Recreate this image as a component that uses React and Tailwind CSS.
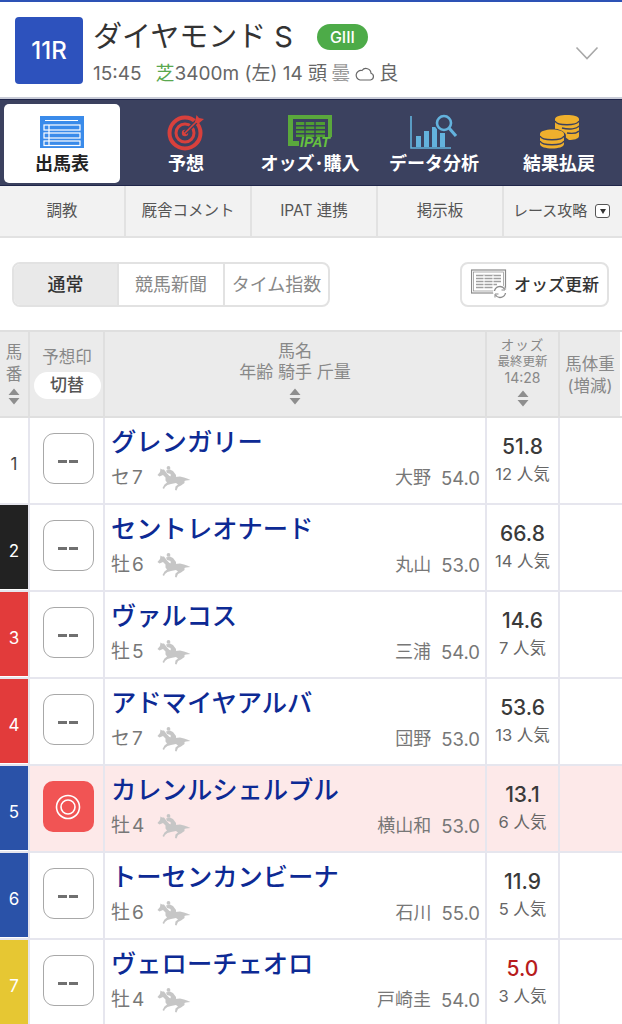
const horses = [
  { n: 1, bg: "bg-white", fg: "text-[#444]", name: "グレンガリー", sub: "セ", age: "7", j: "大野", w: "54.0", o: "51.8", p: "12" },
  { n: 2, bg: "bg-[#222222]", fg: "text-white", name: "セントレオナード", sub: "牡", age: "6", j: "丸山", w: "53.0", o: "66.8", p: "14" },
  { n: 3, bg: "bg-[#e23b3b]", fg: "text-white", name: "ヴァルコス", sub: "牡", age: "5", j: "三浦", w: "54.0", o: "14.6", p: "7" },
  { n: 4, bg: "bg-[#e23b3b]", fg: "text-white", name: "アドマイヤアルバ", sub: "セ", age: "7", j: "団野", w: "53.0", o: "53.6", p: "13" },
  { n: 5, bg: "bg-[#2a52a8]", fg: "text-white", name: "カレンルシェルブル", sub: "牡", age: "4", j: "横山和", w: "53.0", o: "13.1", p: "6", mark: true },
  { n: 6, bg: "bg-[#2a52a8]", fg: "text-white", name: "トーセンカンビーナ", sub: "牡", age: "6", j: "石川", w: "55.0", o: "11.9", p: "5" },
  { n: 7, bg: "bg-[#e6c733]", fg: "text-white", name: "ヴェローチェオロ", sub: "牡", age: "4", j: "戸崎圭", w: "54.0", o: "5.0", p: "3", hot: true },
];

function Horse() {
  return (
    <svg width="34" height="25" viewBox="0 0 34 25" fill="#c6c6c6" className="shrink-0">
      <path d="M0.5 9 L3 6 L3.5 2.5 L5 3.5 L7 3.5 L10 7.5 L12.5 10 L18 11 L23 10.5 L27 11.5 L30 12.5 L33.5 14 L29 14.5 L27.5 15 L27.5 17 L24 19.5 L21 21 L19.5 24.5 L18 24 L18.5 20.5 L21 18.5 L19 17 L14 18 L10.5 19 L8 21 L7 23 L5.5 22 L7.5 18.5 L10 16.5 L8.5 14.5 L8.5 11.5 L6 9 L2.5 10.5 Z" />
      <circle cx="11.5" cy="1.9" r="1.9" />
      <path d="M9 4.5 L13 3.5 L16 5 L19 9 L19 12 L14 12 L13.5 8 L10 7 Z" />
    </svg>
  );
}

function Sort() {
  return (
    <svg width="12" height="17" viewBox="0 0 12 17" fill="#8e8e8e" className="shrink-0">
      <path d="M6 0.5 L11.5 7 H0.5 Z M0.5 10 H11.5 L6 16.5 Z" />
    </svg>
  );
}

function Row({ h }) {
  return (
    <div className={`grid h-[87px] grid-cols-[30px_75px_382px_73px_62px] border-b-2 border-[#e6e6ee] ${h.mark ? "bg-[#fde9e9]" : "bg-white"}`}>
      <div className="border-r-2 border-[#e6e6ee] bg-white">
        <div className={`flex h-[84px] w-[28px] items-center justify-center pt-[10px] text-[17px] ${h.bg} ${h.fg}`}>{h.n}</div>
      </div>
      <div className="flex items-start justify-center border-r-2 border-[#e6e6ee] pl-[3px] pt-[15px]">
        {h.mark ? (
          <div className="flex h-[51px] w-[51px] items-center justify-center rounded-[10px] bg-[#f15454]">
            <svg width="26" height="26" viewBox="0 0 26 26" fill="none" stroke="#fff" strokeWidth="1.6">
              <circle cx="13" cy="13" r="11.5" />
              <circle cx="13" cy="13" r="7" />
            </svg>
          </div>
        ) : (
          <div className="flex h-[51px] w-[51px] items-center justify-center rounded-[11px] border border-[#a8a8a8] bg-white pt-[6px]">
            <div className="flex gap-[2px]">
              <span className="h-[2.5px] w-[9px] bg-[#707070]" />
              <span className="h-[2.5px] w-[9px] bg-[#707070]" />
            </div>
          </div>
        )}
      </div>
      <div className="flex flex-col border-r-2 border-[#e6e6ee] pl-[6px] pr-[5px] pt-[6px]">
        <div className="whitespace-nowrap text-[25.3px] font-medium leading-[36px] text-[#0d2a94]">{h.name}</div>
        <div className="mt-[1px] flex items-center">
          <span className="w-[46px] text-[19px] leading-[34px] tracking-[2px] text-[#777]">{h.sub}{h.age}</span>
          <Horse />
          <span className="ml-auto text-[18px] leading-[34px] text-[#777]">{h.j}</span>
          <span className="ml-[10px] text-[18.5px] leading-[34px] text-[#777]">{h.w}</span>
        </div>
      </div>
      <div className="flex flex-col items-center border-r-2 border-[#e6e6ee] pt-[16px]">
        <div className={`text-[21px] font-medium leading-[26px] ${h.hot ? "text-[#b71c1c]" : "text-[#3a3a3a]"}`}>{h.o}</div>
        <div className="mt-[1px] whitespace-nowrap text-[16.5px] leading-[26px] text-[#666]">{h.p} 人気</div>
      </div>
      <div />
    </div>
  );
}

function NavItem({ icon, label, active }) {
  return (
    <div className={active ? "mb-[2px] ml-[4px] mr-[4px] mt-[4px] flex flex-col items-center rounded-[5px] bg-white pt-[10px]" : "flex flex-col items-center pt-[14px]"}>
      <div className="flex h-[36px] items-center justify-center">{icon}</div>
      <div className={`mt-[1px] whitespace-nowrap text-[18px] font-bold leading-[26px] ${active ? "text-[#222]" : "text-white"}`}>{label}</div>
    </div>
  );
}

export default function App() {
  return (
    <div className="h-[1024px] w-[622px] overflow-hidden bg-white font-['Inter','Noto_Sans_CJK_JP',sans-serif]">
      <div className="h-[2px] bg-[#2d52b5]" />
      {/* Race header */}
      <div className="flex h-[97px] items-start border-b-2 border-[#c9ccd8] pl-[15px] pt-[15px]">
        <div className="flex h-[67px] w-[68px] items-center justify-center rounded-[4px] bg-[#2d52bd] pt-[1px] text-[24px] font-medium text-white">11R</div>
        <div className="ml-[10px] flex w-[488px] flex-col">
          <div className="flex h-[40px] items-center">
            <span className="whitespace-nowrap text-[29px] leading-[40px] text-[#333]">ダイヤモンド S</span>
            <span className="ml-[24px] flex h-[26px] w-[51px] items-center justify-center rounded-full bg-[#4dab48] text-[16px] font-medium text-white">GIII</span>
          </div>
          <div className="mt-[3px] flex items-center whitespace-nowrap text-[19px] leading-[28px] text-[#666]">
            <span>15:45</span>
            <span className="ml-[14px] text-[#5aa84f]">芝</span>
            <span>3400m (左) 14 頭</span>
            <span className="ml-[4px] text-[#999]">曇</span>
            <svg width="20" height="16" viewBox="0 0 20 16" fill="none" stroke="#666" strokeWidth="1.2" className="ml-[5px]">
              <path d="M5 14 H15.5 A3.5 3.5 0 0 0 16 7.2 A5 5 0 0 0 7 4.5 A4.2 4.2 0 0 0 5 14 Z" />
            </svg>
            <span className="ml-[4px]">良</span>
          </div>
        </div>
        <svg width="24" height="14" viewBox="0 0 24 14" fill="none" stroke="#a8a8a8" strokeWidth="1.6" className="ml-[-6px] mt-[29px]">
          <path d="M1.5 1.5 L12 12.5 L22.5 1.5" />
        </svg>
      </div>
      {/* Main nav */}
      <div className="grid h-[87px] grid-cols-[124px_124px_124px_124px_126px] border-y border-[#20264a] bg-[#3b415f]">
        <NavItem
          active
          label="出馬表"
          icon={
            <svg width="44" height="32" viewBox="0 0 44 32">
              <rect width="44" height="32" fill="#3a8bea" />
              <g fill="none" stroke="#fff" strokeWidth="1.2">
                <path d="M5 4.5 H38" />
                <rect x="4" y="9" width="36" height="5" />
                <rect x="4" y="17" width="36" height="5" />
                <rect x="4" y="25" width="36" height="4.5" />
                <path d="M9 9 V29 " />
              </g>
            </svg>
          }
        />
        <NavItem
          label="予想"
          icon={
            <svg width="38" height="38" viewBox="0 0 38 38" fill="none">
              <circle cx="18" cy="20" r="15.5" stroke="#d8403c" strokeWidth="4" />
              <circle cx="18" cy="20" r="9" stroke="#d8403c" strokeWidth="3" />
              <circle cx="18" cy="20" r="3.2" fill="#d8403c" />
              <path d="M18 20 L31 7" stroke="#3b415f" strokeWidth="4" />
              <path d="M18 20 L31 7" stroke="#d8403c" strokeWidth="1.6" />
              <path d="M28 9 L29.5 2 L32 5 L37 6 L31 11 Z" fill="#d8403c" />
            </svg>
          }
        />
        <NavItem
          label="オッズ･購入"
          icon={
            <svg width="46" height="36" viewBox="0 0 46 36">
              <path d="M1 1 H45 V23 H41 V5 H6 V27 H12 V32 H1 Z" fill="#5aa83c" />
              <path d="M9 8 H38 V11 H9 Z M9 12.5 H38 V15 H9 Z M9 16.5 H38 V19 H9 Z M9 20.5 H38 V23 H9 Z" fill="#4f9e33" />
              <path d="M18 8 V23 M28 8 V23" stroke="#3b415f" strokeWidth="1.4" />
              <text x="13" y="33" fontFamily="Liberation Sans, sans-serif" fontSize="14" fontStyle="italic" fontWeight="700" fill="#66c23f">IPAT</text>
            </svg>
          }
        />
        <NavItem
          label="データ分析"
          icon={
            <svg width="50" height="36" viewBox="0 0 50 36" fill="none">
              <path d="M2 2 V34 H42" stroke="#63b2dd" strokeWidth="1.6" />
              <rect x="7" y="22" width="5" height="11" fill="#63b2dd" />
              <rect x="15" y="17" width="5" height="16" fill="#63b2dd" />
              <rect x="23" y="13" width="5" height="20" fill="#63b2dd" />
              <rect x="31" y="19" width="5" height="14" fill="#63b2dd" />
              <circle cx="35" cy="9" r="7" stroke="#3b415f" strokeWidth="5" />
              <circle cx="35" cy="9" r="7" stroke="#63b2dd" strokeWidth="2.6" />
              <path d="M40 14 L47 22" stroke="#63b2dd" strokeWidth="3.2" />
            </svg>
          }
        />
        <NavItem
          label="結果払戻"
          icon={
            <svg width="40" height="36" viewBox="0 0 40 36">
              <g fill="#efb02d">
                <path d="M16 5 C16 -0.5 40 -0.5 40 5 V22 C40 25 34 26 30 26 L16 15 Z" />
              </g>
              <g fill="none" stroke="#3b415f" strokeWidth="1.4">
                <path d="M16 7 C18 12 38 12 40 7 M23 14 C30 16 38 15 40 12 M28 19 C34 20 38 19 40 17" />
              </g>
              <ellipse cx="13" cy="22" rx="14" ry="7.5" fill="#3b415f" />
              <path d="M1 20 C1 14 25 14 25 20 V30 C25 36 1 36 1 30 Z" fill="#efb02d" />
              <path d="M1 22 C3 27 23 27 25 22 M1 27 C3 32 23 32 25 27" fill="none" stroke="#3b415f" strokeWidth="1.4" />
            </svg>
          }
        />
      </div>
      {/* Sub nav */}
      <div className="grid h-[52px] grid-cols-[126px_126px_126px_126px_118px] border-b-2 border-[#e2e2e2] bg-[#f2f2f2] text-[15.5px] text-[#555]">
        <div className="flex items-center justify-center border-r-2 border-[#e2e2e2]">調教</div>
        <div className="flex items-center justify-center border-r-2 border-[#e2e2e2]">厩舎コメント</div>
        <div className="flex items-center justify-center border-r-2 border-[#e2e2e2]">IPAT 連携</div>
        <div className="flex items-center justify-center border-r-2 border-[#e2e2e2]">掲示板</div>
        <div className="flex items-center gap-[8px] pl-[9px] whitespace-nowrap">
          <span className="text-[15px]">レース攻略</span>
          <span className="flex h-[14px] w-[15px] items-center justify-center rounded-[3px] border border-[#555] bg-white">
            <span className="border-x-[3.5px] border-t-[5px] border-x-transparent border-t-[#333]" />
          </span>
        </div>
      </div>
      {/* Toolbar */}
      <div className="flex h-[92px] items-center justify-between pl-[12px] pr-[13px]">
        <div className="flex h-[45px] w-[318px] overflow-hidden rounded-[8px] border-2 border-[#e2e2e2] text-[18px]">
          <div className="flex w-[105px] items-center justify-center border-r-2 border-[#e2e2e2] bg-[#e9e9e9] font-medium text-[#333]">通常</div>
          <div className="flex w-[106px] items-center justify-center border-r-2 border-[#e2e2e2] text-[#888]">競馬新聞</div>
          <div className="flex flex-1 items-center justify-center whitespace-nowrap text-[#888]">タイム指数</div>
        </div>
        <div className="flex h-[45px] w-[149px] items-center rounded-[8px] border-2 border-[#e2e2e2] pl-[9px] text-[17px] font-medium text-[#333]">
          <svg width="37" height="30" viewBox="0 0 37 30" fill="none" stroke="#8a8a8a">
            <rect x="0.5" y="1" width="34" height="23" strokeWidth="1.2" />
            <rect x="2.5" y="3" width="30" height="19" strokeWidth="0.7" />
            <path d="M5 6.5 H30 M5 9.5 H30 M5 12.5 H30 M5 15.5 H26 M5 18.5 H22" strokeWidth="1.6" stroke="#a0a0a0" />
            <path d="M13 6 V20 M22 6 V20" stroke="#fff" strokeWidth="1" />
            <circle cx="29" cy="23" r="7" fill="#fff" stroke="none" />
            <path d="M23.5 22 A5.5 5.5 0 0 1 33.5 20 M34.5 24 A5.5 5.5 0 0 1 24.5 26" strokeWidth="1.3" />
            <path d="M34 17.5 V21 H30.5 M24 28.5 V25 H27.5" strokeWidth="1" />
          </svg>
          <span className="ml-[6px] mt-[3px] whitespace-nowrap">オッズ更新</span>
        </div>
      </div>
      {/* Table head */}
      <div className="grid h-[88px] grid-cols-[30px_75px_382px_73px_62px] border-y-2 border-[#dfdfdf] bg-[#ebebeb] text-[#888]">
        <div className="flex flex-col items-center border-r-2 border-[#dfdfdf] pt-[9px] text-[16.5px] leading-[22px]">
          <div>馬</div>
          <div>番</div>
          <div className="mt-[3px]"><Sort /></div>
        </div>
        <div className="flex flex-col items-center border-r-2 border-[#dfdfdf] pl-[1px] pt-[13px]">
          <div className="text-[16.5px] leading-[24px]">予想印</div>
          <div className="mt-[3px] flex h-[27px] w-[67px] items-center justify-center rounded-full bg-white text-[17px] font-medium text-[#555]">切替</div>
        </div>
        <div className="flex flex-col items-center border-r-2 border-[#dfdfdf] pt-[9px] text-[17px] leading-[21px]">
          <div>馬名</div>
          <div>年齢 騎手 斤量</div>
          <div className="mt-[5px]"><Sort /></div>
        </div>
        <div className="flex flex-col items-center border-r-2 border-[#dfdfdf] pt-[5px] text-[#888]">
          <div className="text-[13.5px] leading-[17px] tracking-[1px]">オッズ</div>
          <div className="text-[12.5px] leading-[16px]">最終更新</div>
          <div className="text-[14px] leading-[16px]">14:28</div>
          <div className="mt-[4px]"><Sort /></div>
        </div>
        <div className="flex flex-col items-center justify-center border-r-2 border-white pt-[2px] text-[16.5px] leading-[22px]">
          <div>馬体重</div>
          <div>(増減)</div>
        </div>
      </div>
      {horses.map((h) => (
        <Row key={h.n} h={h} />
      ))}
    </div>
  );
}
